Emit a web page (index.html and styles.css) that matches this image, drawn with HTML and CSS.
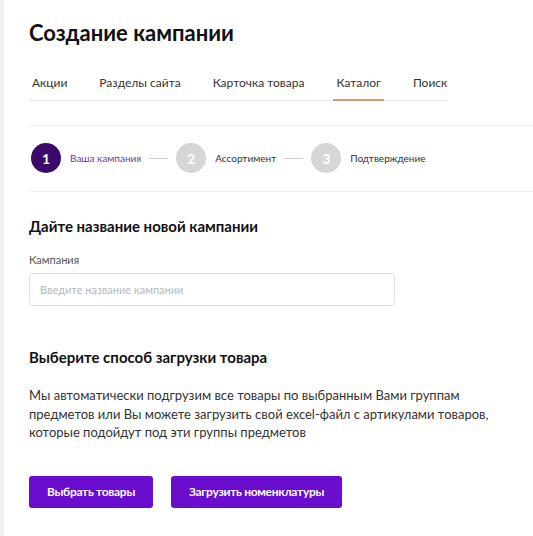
FILE: index.html
```html
<!DOCTYPE html>
<html lang="ru">
<head>
    <meta charset="UTF-8">
    <title>Создание кампании</title>
    <link rel="stylesheet" href="styles.css">
</head>
<body>
    <div class="side"></div>
    <main class="page">
        <h1 class="title">Создание кампании</h1>

        <nav class="tabs">
            <a class="tab">Акции</a>
            <a class="tab">Разделы сайта</a>
            <a class="tab">Карточка товара</a>
            <a class="tab active">Каталог</a>
            <a class="tab">Поиск</a>
        </nav>

        <div class="steps">
            <div class="step current">
                <span class="step-num">1</span>
                <span class="step-name">Ваша кампания</span>
            </div>
            <span class="step-line"></span>
            <div class="step">
                <span class="step-num">2</span>
                <span class="step-name">Ассортимент</span>
            </div>
            <span class="step-line"></span>
            <div class="step">
                <span class="step-num">3</span>
                <span class="step-name">Подтверждение</span>
            </div>
        </div>

        <section class="block">
            <h2 class="block-title">Дайте название новой кампании</h2>
            <label class="field-label" for="name">Кампания</label>
            <input class="field" id="name" type="text" placeholder="Введите название кампании">
        </section>

        <section class="block upload">
            <h2 class="block-title">Выберите способ загрузки товара</h2>
            <p class="text">Мы автоматически подгрузим все товары по выбранным Вами группам предметов или Вы можете загрузить свой excel-файл с артикулами товаров, которые подойдут под эти группы предметов</p>
            <div class="actions">
                <button class="btn">Выбрать товары</button>
                <button class="btn wide">Загрузить номенклатуры</button>
            </div>
        </section>
    </main>
</body>
</html>
```

FILE: styles.css
```css
* {
    margin: 0;
    padding: 0;
    box-sizing: border-box;
}
body {
    font-family: Lato, "Open Sans", sans-serif;
    background: #fff;
    color: #1a1a1a;
    display: flex;
    min-height: 536px;
    overflow: hidden;
}
.side {
    width: 4px;
    background: #f1f1f1;
    flex-shrink: 0;
}
.page {
    flex: 1;
    padding: 18px 0 0 25px;
}
.title {
    font-size: 22px;
    font-weight: 700;
    color: #111;
    line-height: 30px;
}
.tabs {
    display: flex;
    gap: 26px;
    width: 418px;
    margin-top: 25px;
    border-bottom: 1px solid #e6e6e6;
}
.tab {
    font-size: 12px;
    line-height: 16px;
    color: #333;
    white-space: nowrap;
    padding: 2px 3px 8px;
    border-bottom: 2px solid transparent;
    margin-bottom: -1px;
}
.tab.active {
    border-bottom-color: #cf9a77;
}
.steps {
    display: flex;
    align-items: center;
    margin-top: 24px;
    padding: 17px 0 18px 2px;
    border-top: 1px solid #f0f0f0;
    border-bottom: 1px solid #f0f0f0;
}
.step {
    display: flex;
    align-items: center;
    gap: 9px;
}
.step-num {
    width: 30px;
    height: 30px;
    border-radius: 50%;
    background: #d6d6d6;
    color: #fff;
    font-size: 14px;
    font-weight: 700;
    display: flex;
    align-items: center;
    justify-content: center;
}
.step.current .step-num {
    background: #3b0b6c;
}
.step-name {
    font-size: 10px;
    color: #333;
}
.step.current .step-name {
    color: #6a3c8c;
}
.step-line {
    width: 19px;
    height: 1px;
    background: #cfcfcf;
    margin: 0 8px;
}
.block {
    padding-top: 24px;
}
.block-title {
    font-size: 15px;
    font-weight: 700;
    color: #111;
    line-height: 20px;
}
.field-label {
    display: block;
    font-size: 11px;
    line-height: 13px;
    color: #555;
    margin-top: 17px;
}
.field {
    display: block;
    width: 366px;
    height: 33px;
    margin-top: 7px;
    border: 1px solid #dedede;
    border-radius: 4px;
    padding: 0 10px;
    font-family: inherit;
    font-size: 11px;
}
.field::placeholder {
    color: #b9b9b9;
}
.upload {
    padding-top: 41px;
}
.text {
    font-size: 13px;
    line-height: 18.5px;
    color: #333;
    width: 470px;
    margin-top: 19px;
}
.actions {
    display: flex;
    gap: 18px;
    margin-top: 34px;
}
.btn {
    height: 32px;
    width: 124px;
    background: #6a0dcf;
    color: #fff;
    border: none;
    border-radius: 3px;
    font-family: inherit;
    font-size: 12px;
    font-weight: 700;
    letter-spacing: -0.3px;
}
.btn.wide {
    width: 171px;
}
```
